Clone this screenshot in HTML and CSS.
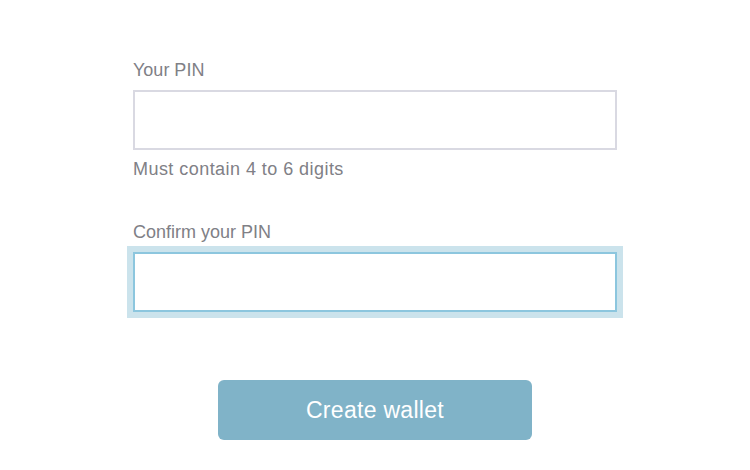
FILE: index.html
```html
<!DOCTYPE html>
<html lang="en">
<head>
  <meta charset="UTF-8">
  <meta name="viewport" content="width=device-width, initial-scale=1.0">
  <title>Create wallet</title>
  <link rel="stylesheet" href="styles.css">
</head>
<body>
  <form class="pin-form">
    <div class="field">
      <label class="field-label" for="pin">Your PIN</label>
      <input class="pin-input" id="pin" type="password" inputmode="numeric">
      <p class="field-hint">Must contain 4 to 6 digits</p>
    </div>
    <div class="field field-confirm">
      <label class="field-label" for="pinConfirm">Confirm your PIN</label>
      <input class="pin-input is-focused" id="pinConfirm" type="password" inputmode="numeric">
    </div>
    <div class="actions">
      <button class="create-btn" type="button">Create wallet</button>
    </div>
  </form>
</body>
</html>
```

FILE: styles.css
```css
* {
  box-sizing: border-box;
  margin: 0;
  padding: 0;
}

body {
  background-color: #fff;
  font-family: "Helvetica Neue", "Liberation Sans", Arial, sans-serif;
  font-weight: 300;
  color: #808086;
}

.pin-form {
  width: 484px;
  margin: 0 auto;
  padding-top: 59px;
}

.field-label {
  display: block;
  font-size: 18px;
  line-height: 22px;
  margin-bottom: 9px;
}

.pin-input {
  display: block;
  width: 100%;
  height: 60px;
  border: 2px solid #d9d9e2;
  background: #fff;
  outline: none;
  font-size: 18px;
  padding: 0 12px;
}

.pin-input.is-focused {
  border-color: #8cc6de;
  box-shadow: 0 0 0 6px #cbe3ec;
}

.field-hint {
  font-size: 18px;
  line-height: 22px;
  margin-top: 8px;
  letter-spacing: 0.45px;
}

.field-confirm {
  margin-top: 41px;
}

.actions {
  display: flex;
  justify-content: center;
  margin-top: 68px;
}

.create-btn {
  width: 314px;
  height: 60px;
  border: none;
  border-radius: 6px;
  background-color: #80b3c8;
  color: #fff;
  font-family: inherit;
  font-weight: 300;
  font-size: 23px;
  letter-spacing: 0.3px;
  cursor: pointer;
}
```
